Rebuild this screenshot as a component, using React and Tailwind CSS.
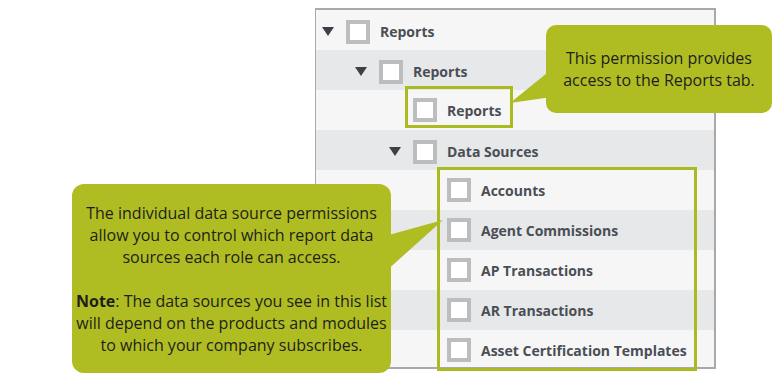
import React from "react";

const rows = [
  { label: "Reports", level: 0, toggle: true },
  { label: "Reports", level: 1, toggle: true },
  { label: "Reports", level: 2, toggle: false },
  { label: "Data Sources", level: 2, toggle: true },
  { label: "Accounts", level: 3, toggle: false },
  { label: "Agent Commissions", level: 3, toggle: false },
  { label: "AP Transactions", level: 3, toggle: false },
  { label: "AR Transactions", level: 3, toggle: false },
  { label: "Asset Certification Templates", level: 3, toggle: false },
];

const indent = ["pl-[6px]", "pl-[39px]", "pl-[73px]", "pl-[107px]"];

const Caret = () => (
  <svg width="12" height="9" viewBox="0 0 12 9" className="shrink-0">
    <polygon points="0,0 12,0 6,9" fill="#3d4046" />
  </svg>
);

const TreeRow = ({ row, index }) => (
  <div
    className={`h-[40px] flex items-center ${row.toggle ? "pt-[3px]" : "pt-0"} ${indent[row.level]} ${
      index % 2 === 0 ? "bg-[#f6f6f6]" : "bg-[#e7e8e9]"
    }`}
  >
    {row.toggle ? <Caret /> : <div className="w-[12px] shrink-0" />}
    <div className="ml-[12px] w-[24px] h-[24px] border-[4px] border-[#bcbdbe] bg-white shrink-0" />
    <span className="ml-[10px] text-[14px] font-bold text-[#4a4e55] whitespace-nowrap">
      {row.label}
    </span>
  </div>
);

export default function App() {
  return (
    <div className="relative w-[778px] h-[378px] bg-white overflow-hidden font-['Open_Sans',sans-serif]">
      {/* Permission tree */}
      <div className="ml-[315px] pt-[8px]">
        <div className="w-[401px] h-[361px] border-l border-t-2 border-r-2 border-b-2 border-[#a9a9a9] overflow-hidden">
          {rows.map((row, i) => (
            <TreeRow key={i} row={row} index={i} />
          ))}
        </div>
      </div>

      {/* Highlight boxes */}
      <div className="absolute left-[405px] top-[86px] w-[108px] h-[42px] border-[3px] border-[#abba20]" />
      <div className="absolute left-[437px] top-[167px] w-[260px] h-[204px] border-[3px] border-[#abba20]" />

      {/* Callout pointers */}
      <svg className="absolute left-0 top-0" width="778" height="378">
        <polygon points="552,69 552,97 510,103" fill="#afbd22" />
        <polygon points="385,236 385,272 443,220" fill="#afbd22" />
      </svg>

      {/* Callout: Reports tab */}
      <div className="absolute left-[546px] top-[25px] w-[226px] h-[88px] rounded-[10px] bg-[#afbd22] flex items-center justify-center">
        <p className="text-[16px] leading-[22px] text-[#1e1e1c] text-center whitespace-nowrap">
          This permission provides
          <br />
          access to the Reports tab.
        </p>
      </div>

      {/* Callout: data sources */}
      <div className="absolute left-[72px] top-[184px] w-[319px] h-[189px] rounded-[12px] bg-[#afbd22] flex items-center justify-center">
        <p className="text-[16px] leading-[22px] text-[#1e1e1c] text-center whitespace-nowrap">
          The individual data source permissions
          <br />
          allow you to control which report data
          <br />
          sources each role can access.
          <br />
          <br />
          <span className="font-bold">Note</span>: The data sources you see in this list
          <br />
          will depend on the products and modules
          <br />
          to which your company subscribes.
        </p>
      </div>
    </div>
  );
}
